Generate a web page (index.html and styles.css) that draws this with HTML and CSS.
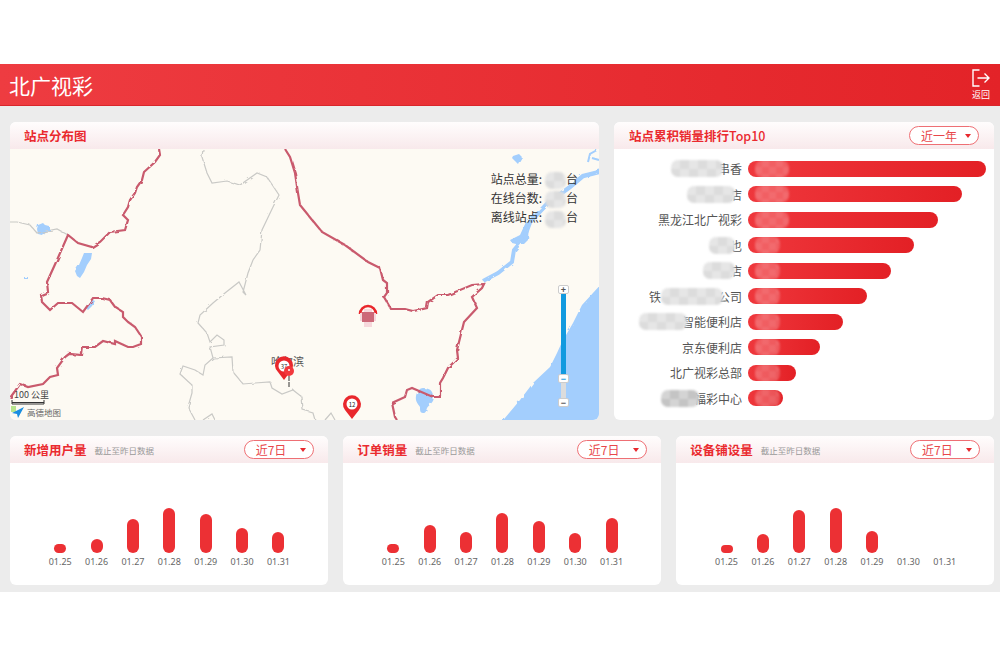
FILE: index.html
```html
<!DOCTYPE html>
<html lang="zh-CN">
<head>
    <meta charset="UTF-8">
    <meta name="viewport" content="width=device-width, initial-scale=1.0">
    <title>北广视彩</title>
    <link rel="stylesheet" href="styles.css">
</head>
<body>
    <header class="topbar">
        <div class="logo">北广视彩</div>
        <a class="back">
            <svg class="back-icon" viewBox="0 0 18 18" width="18" height="18">
                <path d="M7.5 1H1v16h6.5" fill="none" stroke="#fff" stroke-width="1.4"/>
                <path d="M5.5 9H17M12.5 4.5L17 9l-4.5 4.5" fill="none" stroke="#fff" stroke-width="1.4"/>
            </svg>
            <span>返回</span>
        </a>
    </header>

    <main class="content">
        <div class="row-top">
            <section class="panel">
                <div class="panel-head"><h2>站点分布图</h2></div>
                <div class="map">
                    <svg class="map-svg" viewBox="10 149 589 271" width="589" height="271">
                        <defs>
                            <filter id="rough" x="-5%" y="-5%" width="110%" height="110%">
                                <feTurbulence type="fractalNoise" baseFrequency="0.14" numOctaves="2" seed="4"/>
                                <feDisplacementMap in="SourceGraphic" scale="3"/>
                            </filter>
                        </defs>
                        <!-- water -->
                        <g fill="#a3cefd" filter="url(#rough)">
                            <path d="M603 282L582 305 573 323 562 342 557 353 550 367 533 383 520 400 500 424H603Z"/>
                            <path d="M423 388c7 0 11 4 11 9 0 5-5 8-7 11-1 3-1 5-4 5-3 0-3-3-3-6-2-3-5-6-4-11 1-5 4-8 7-8Z"/>
                            <path d="M510 240l10-5 6-13 3 1-1 17-4 4-8 0-4-1Z"/>
                            <path d="M513 156l6-2 3 3-2 3-2 4-3-3-3-3Z"/>
                            <path d="M38 225l5-2 3 3 4 1 0 3-5 1-3 4-4-1-1-5Z"/>
                            <path d="M84 253l8 0-1 6-4 6-3 7-4 6-3-2-2-5 4-6 3-7Z"/>
                            <path d="M88 303l5-3 2 1-3 5-4 4-2-2Z"/>
                            <path d="M24 277h4v2h-4Z"/>
                        </g>
                        <g fill="none" stroke="#a3cefd" filter="url(#rough)">
                            <path stroke-width="4.500" d="M603 171L583 176 570 187 548 203 530 222 524 238"/>
                            <path stroke-width="4" d="M524 238L514 250 512 262 498 273 483 281"/>
                            <path stroke-width="2" d="M597 150L590 154 588 162M599 160L592 158"/>
                        </g>
                        <!-- province lines -->
                        <g fill="none" stroke="#c9c9c6" stroke-width="1.200" filter="url(#rough)">
                            <path d="M10 222L17 222 30 225 37 233 57 229 68 235"/>
                            <path d="M203 149L202 157 207 173 212 183 227 181 240 185 257 173 267 177 279 195 273 207 262 230 260 250 253 260 248 273 243 292 246 295 239 282 225 293 213 303 200 315 198 323 207 333 210 342 217 335 224 340 224 345 210 347 213 358 232 357 233 372 243 384 255 383 270 382 272 388 282 394 293 390 302 397 303 410 313 413 315 420"/>
                            <path d="M213 358L205 365 203 375 195 370 183 366 180 374 192 385 192 393 188 407 195 420"/>
                            <path d="M203 420L212 414 215 420M325 420L331 413 335 420"/>
                        </g>
                        <!-- border -->
                        <g fill="none" stroke="#c95a6d" stroke-width="2.200" filter="url(#rough)">
                            <path d="M159 149L160 155 155 162 144 172 142 180 137 187 135 193 130 200 128 207 123 215 128 220 125 230 110 232 100 242 92 247 78 243 68 235 57 260 47 282 48 292 41 295 42 302 50 310 58 303 72 303 83 312 93 298 102 298 110 300 115 307 123 312 123 317 128 322 135 327 141 336 141 344 133 347 128 347 115 341 115 344 103 341 95 347 83 347 82 355 69 354 65 357 57 368 58 375 50 377 43 384 28 387 20 384 10 398"/>
                            <path d="M285 149L290 157 295 173 298 193 300 205 322 232 345 245 368 262 380 268 383 280 387 283 387 293 384 297 391 309 405 309 413 311 427 308 428 302 438 295 448 295 472 285 484 284 482 288 472 297 477 308 464 322 462 330 457 350 458 358 448 368 443 378 440 383 440 397 433 397 412 388 407 390 405 397 392 403 395 417 397 420"/>
                        </g>
                        <!-- markers -->
                        <text class="city" x="271" y="366">哈尔滨</text>
                        <path class="pin" d="M284 380l-6-8a9 9 0 1 1 12 0Z"/>
                        <circle cx="284" cy="366" r="5.500" fill="#fff"/>
                        <text class="pin-num" x="284" y="369">37</text>
                        <circle cx="289" cy="371" r="5" fill="#f2383d"/>
                        <circle cx="289" cy="370" r="1" fill="#fff"/>
                        <path d="M289 376v11" stroke="#333" stroke-width="1" stroke-dasharray="5 1 5"/>
                        <path class="pin" d="M352 419l-7-9a9 9 0 1 1 14 0Z"/>
                        <circle cx="352" cy="404" r="5.500" fill="#fff"/>
                        <text class="pin-num" x="352" y="407">12</text>
                        <path d="M360 314a8 8 0 1 1 16 0" fill="none" stroke="#e9272c" stroke-width="2.600"/>
                        <path d="M364 309h8v4h4v8h-4v6h-8v-6h-4v-8h4Z" fill="#f6d8dc"/>
                        <rect x="362" y="312" width="12" height="10" fill="#cc6878"/>
                        <!-- scale and brand -->
                        <text class="scale" x="14" y="398">100 公里</text>
                        <path d="M12 400v4h32v-4M12 402.500h32" fill="none" stroke="#333" stroke-width="1"/>
                        <rect x="11" y="406" width="5" height="6" fill="#b7e58e"/>
                        <path d="M24 407l-12 6 5 1 1 4Z" fill="#1a8ee0"/>
                        <text class="brand" x="27" y="416">高德地图</text>
                    </svg>

                    <div class="stats">
                        <div>站点总量:<i class="mosaic w-21"></i>台</div>
                        <div>在线台数:<i class="mosaic w-21"></i>台</div>
                        <div>离线站点:<i class="mosaic w-21"></i>台</div>
                    </div>

                    <div class="zoom">
                        <button class="zoom-btn">+</button>
                        <div class="zoom-track">
                            <div class="zoom-fill"></div>
                        </div>
                        <button class="zoom-btn handle">−</button>
                        <div class="zoom-rest"></div>
                        <button class="zoom-btn">−</button>
                    </div>
                </div>
            </section>

            <section class="panel rank-panel">
                <div class="panel-head">
                    <h2>站点累积销量排行<span class="latin">Top10</span></h2>
                    <div class="select">近一年<span class="caret"></span></div>
                </div>
                <ul class="rank-list">
                    <li class="rank-item">
                        <div class="rank-name"><i class="mosaic w-52 over"></i>串香</div>
                        <div class="rank-bar" style="width: 238px"><i class="smear wide"></i></div>
                    </li>
                    <li class="rank-item">
                        <div class="rank-name"><i class="mosaic w-48 over"></i>店</div>
                        <div class="rank-bar" style="width: 214px"><i class="smear wide"></i></div>
                    </li>
                    <li class="rank-item">
                        <div class="rank-name">黑龙江北广视彩</div>
                        <div class="rank-bar" style="width: 190px"><i class="smear wide"></i></div>
                    </li>
                    <li class="rank-item">
                        <div class="rank-name"><i class="mosaic w-26 over"></i>也</div>
                        <div class="rank-bar" style="width: 166px"><i class="smear"></i></div>
                    </li>
                    <li class="rank-item">
                        <div class="rank-name"><i class="mosaic w-32 over"></i>店</div>
                        <div class="rank-bar" style="width: 143px"><i class="smear"></i></div>
                    </li>
                    <li class="rank-item">
                        <div class="rank-name">铁<i class="mosaic w-62 over"></i>公司</div>
                        <div class="rank-bar" style="width: 119px"><i class="smear"></i></div>
                    </li>
                    <li class="rank-item">
                        <div class="rank-name"><i class="mosaic w-48 over"></i>智能便利店</div>
                        <div class="rank-bar" style="width: 95px"><i class="smear"></i></div>
                    </li>
                    <li class="rank-item">
                        <div class="rank-name">京东便利店</div>
                        <div class="rank-bar" style="width: 72px"><i class="smear"></i></div>
                    </li>
                    <li class="rank-item">
                        <div class="rank-name">北广视彩总部</div>
                        <div class="rank-bar" style="width: 48px"><i class="smear"></i></div>
                    </li>
                    <li class="rank-item">
                        <div class="rank-name"><i class="mosaic w-38 over dark"></i>福彩中心</div>
                        <div class="rank-bar" style="width: 35px"><i class="smear"></i></div>
                    </li>
                </ul>
            </section>
        </div>

        <div class="row-bottom">
            <section class="panel">
                <div class="panel-head">
                    <h2>新增用户量</h2><span class="note">截止至昨日数据</span>
                    <div class="select">近7日<span class="caret"></span></div>
                </div>
                <div class="chart">
                    <div class="col"><div class="bar" style="height: 9px"></div><span>01.25</span></div>
                    <div class="col"><div class="bar" style="height: 14px"></div><span>01.26</span></div>
                    <div class="col"><div class="bar" style="height: 34px"></div><span>01.27</span></div>
                    <div class="col"><div class="bar" style="height: 45px"></div><span>01.28</span></div>
                    <div class="col"><div class="bar" style="height: 39px"></div><span>01.29</span></div>
                    <div class="col"><div class="bar" style="height: 25px"></div><span>01.30</span></div>
                    <div class="col"><div class="bar" style="height: 21px"></div><span>01.31</span></div>
                </div>
            </section>
            <section class="panel">
                <div class="panel-head">
                    <h2>订单销量</h2><span class="note">截止至昨日数据</span>
                    <div class="select">近7日<span class="caret"></span></div>
                </div>
                <div class="chart">
                    <div class="col"><div class="bar" style="height: 9px"></div><span>01.25</span></div>
                    <div class="col"><div class="bar" style="height: 28px"></div><span>01.26</span></div>
                    <div class="col"><div class="bar" style="height: 21px"></div><span>01.27</span></div>
                    <div class="col"><div class="bar" style="height: 40px"></div><span>01.28</span></div>
                    <div class="col"><div class="bar" style="height: 32px"></div><span>01.29</span></div>
                    <div class="col"><div class="bar" style="height: 20px"></div><span>01.30</span></div>
                    <div class="col"><div class="bar" style="height: 35px"></div><span>01.31</span></div>
                </div>
            </section>
            <section class="panel">
                <div class="panel-head">
                    <h2>设备铺设量</h2><span class="note">截止至昨日数据</span>
                    <div class="select">近7日<span class="caret"></span></div>
                </div>
                <div class="chart">
                    <div class="col"><div class="bar" style="height: 8px"></div><span>01.25</span></div>
                    <div class="col"><div class="bar" style="height: 19px"></div><span>01.26</span></div>
                    <div class="col"><div class="bar" style="height: 43px"></div><span>01.27</span></div>
                    <div class="col"><div class="bar" style="height: 45px"></div><span>01.28</span></div>
                    <div class="col"><div class="bar" style="height: 22px"></div><span>01.29</span></div>
                    <div class="col"><span>01.30</span></div>
                    <div class="col"><span>01.31</span></div>
                </div>
            </section>
        </div>
    </main>
</body>
</html>
```

FILE: styles.css
```css
* {
    box-sizing: border-box;
}
body {
    font-family: "Noto Sans CJK SC", "Liberation Sans", sans-serif;
    margin: 0;
    padding-top: 64px;
    background-color: #fff;
    color: #555;
}
.topbar {
    display: flex;
    justify-content: space-between;
    align-items: center;
    height: 42px;
    padding: 0 10px 0 9px;
    background: linear-gradient(90deg, #ee3c41, #e32328);
    border-bottom: 1px solid #d9262b;
}
.logo {
    color: #fff;
    font-size: 21px;
    font-weight: 400;
    line-height: 1;
    margin-top: 1px;
}
.back {
    display: flex;
    flex-direction: column;
    align-items: center;
    color: #fff;
    font-size: 9px;
    line-height: 10px;
}
.back-icon {
    display: block;
    margin-bottom: 3px;
}
.content {
    height: 486px;
    padding: 16px 6px 0 10px;
    background-color: #ececec;
}
.row-top {
    display: flex;
    gap: 15px;
    height: 298px;
    margin-bottom: 16px;
}
.row-top .panel {
    flex: 1;
}
.row-top .rank-panel {
    flex: none;
    width: 380px;
}
.rank-panel .panel-head {
    padding: 0 15px;
}
.row-bottom {
    display: grid;
    grid-template-columns: repeat(3, 1fr);
    gap: 15.5px;
    height: 149px;
}
.panel {
    display: flex;
    flex-direction: column;
    background: #fff;
    border-radius: 6px;
    overflow: hidden;
}
.panel-head {
    display: flex;
    align-items: center;
    flex: none;
    height: 27px;
    padding: 0 14px;
    background: linear-gradient(#fffdfd, #f8e9eb);
}
.panel-head h2 {
    margin: 0;
    font-size: 12.5px;
    font-weight: 700;
    color: #ea2a2f;
}
.latin {
    font-weight: 500;
}
.note {
    margin-left: 8px;
    font-size: 8.5px;
    color: #999;
}
.select {
    display: flex;
    justify-content: space-between;
    align-items: center;
    width: 70px;
    height: 19px;
    margin-left: auto;
    padding: 0 7px 0 11px;
    border: 1px solid #ee6f74;
    border-radius: 10px;
    background: #fff;
    font-size: 12px;
    color: #e8474b;
}
.caret {
    width: 0;
    height: 0;
    border-left: 3px solid transparent;
    border-right: 3px solid transparent;
    border-top: 4px solid #e8282d;
}

/* map */
.map {
    position: relative;
    flex: 1;
    background-color: #fdfaf3;
}
.map-svg {
    display: block;
}
.city {
    font-size: 11px;
    fill: #555;
}
.pin {
    fill: #e9272c;
}
.pin-num {
    font-size: 6px;
    text-anchor: middle;
    fill: #222;
}
.scale {
    font-size: 9px;
    fill: #444;
}
.brand {
    font-size: 8.500px;
    fill: #666;
}
.stats {
    position: absolute;
    top: 21px;
    right: 21px;
    font-size: 12px;
    line-height: 17.5px;
    color: #333;
}
.stats .mosaic {
    margin: 0 0 0 3px;
}
.zoom {
    position: absolute;
    top: 136px;
    left: 548px;
    display: flex;
    flex-direction: column;
    align-items: center;
    width: 11px;
}
.zoom-btn {
    width: 11px;
    height: 9px;
    padding: 0;
    border: 1px solid #ccc;
    border-radius: 2px;
    background: #fff;
    font-size: 9px;
    font-weight: 700;
    line-height: 6px;
    color: #555;
}
.zoom-btn.handle {
    color: #1a9ae0;
}
.zoom-track {
    width: 5px;
    height: 80px;
}
.zoom-fill {
    height: 100%;
    background: #129adf;
}
.zoom-rest {
    width: 5px;
    height: 15px;
    background: #dcdcdc;
}

/* pixelated areas */
.mosaic {
    display: inline-block;
    height: 17px;
    vertical-align: middle;
    border-radius: 7px;
    background: repeating-conic-gradient(#dcdcdc 0 25%, #e6e6e6 0 50%) 0 0 / 18px 18px;
    filter: blur(0.8px);
}
.mosaic.over {
    position: relative;
    margin-right: -5px;
}
.mosaic.dark {
    background: repeating-conic-gradient(#c4c4c4 0 25%, #d4d4d4 0 50%) 0 0 / 18px 18px;
}
.w-21 { width: 21px; }
.w-26 { width: 26px; }
.w-32 { width: 32px; }
.w-38 { width: 38px; }
.w-48 { width: 48px; }
.w-52 { width: 52px; }
.w-62 { width: 62px; }

/* ranking */
.rank-list {
    list-style: none;
    margin: 0;
    padding: 7px 0 0;
}
.rank-item {
    display: flex;
    align-items: center;
    gap: 6px;
    height: 25.5px;
}
.rank-name {
    display: flex;
    justify-content: flex-end;
    align-items: center;
    width: 128px;
    font-size: 12px;
    white-space: nowrap;
}
.rank-bar {
    position: relative;
    height: 16px;
    border-radius: 8px;
    background: linear-gradient(90deg, #ef373c, #e32025);
}
.smear {
    position: absolute;
    top: -1px;
    left: 7px;
    width: 25px;
    height: 18px;
    border-radius: 8px;
    background: repeating-conic-gradient(rgba(255, 255, 255, 0.27) 0 25%, rgba(255, 255, 255, 0.21) 0 50%) 0 0 / 14px 14px;
    filter: blur(0.8px);
}
.smear.wide {
    width: 34px;
}

/* small bar charts */
.chart {
    display: grid;
    grid-template-columns: repeat(7, 1fr);
    flex: 1;
    padding: 0 31px 16px 32px;
}
.col {
    display: flex;
    flex-direction: column;
    justify-content: flex-end;
    align-items: center;
    font-family: "Noto Sans", sans-serif;
    font-size: 9px;
    line-height: 14px;
    color: #666;
}
.bar {
    width: 12px;
    margin-bottom: 2px;
    border-radius: 6px;
    background: #ec3034;
}
```
